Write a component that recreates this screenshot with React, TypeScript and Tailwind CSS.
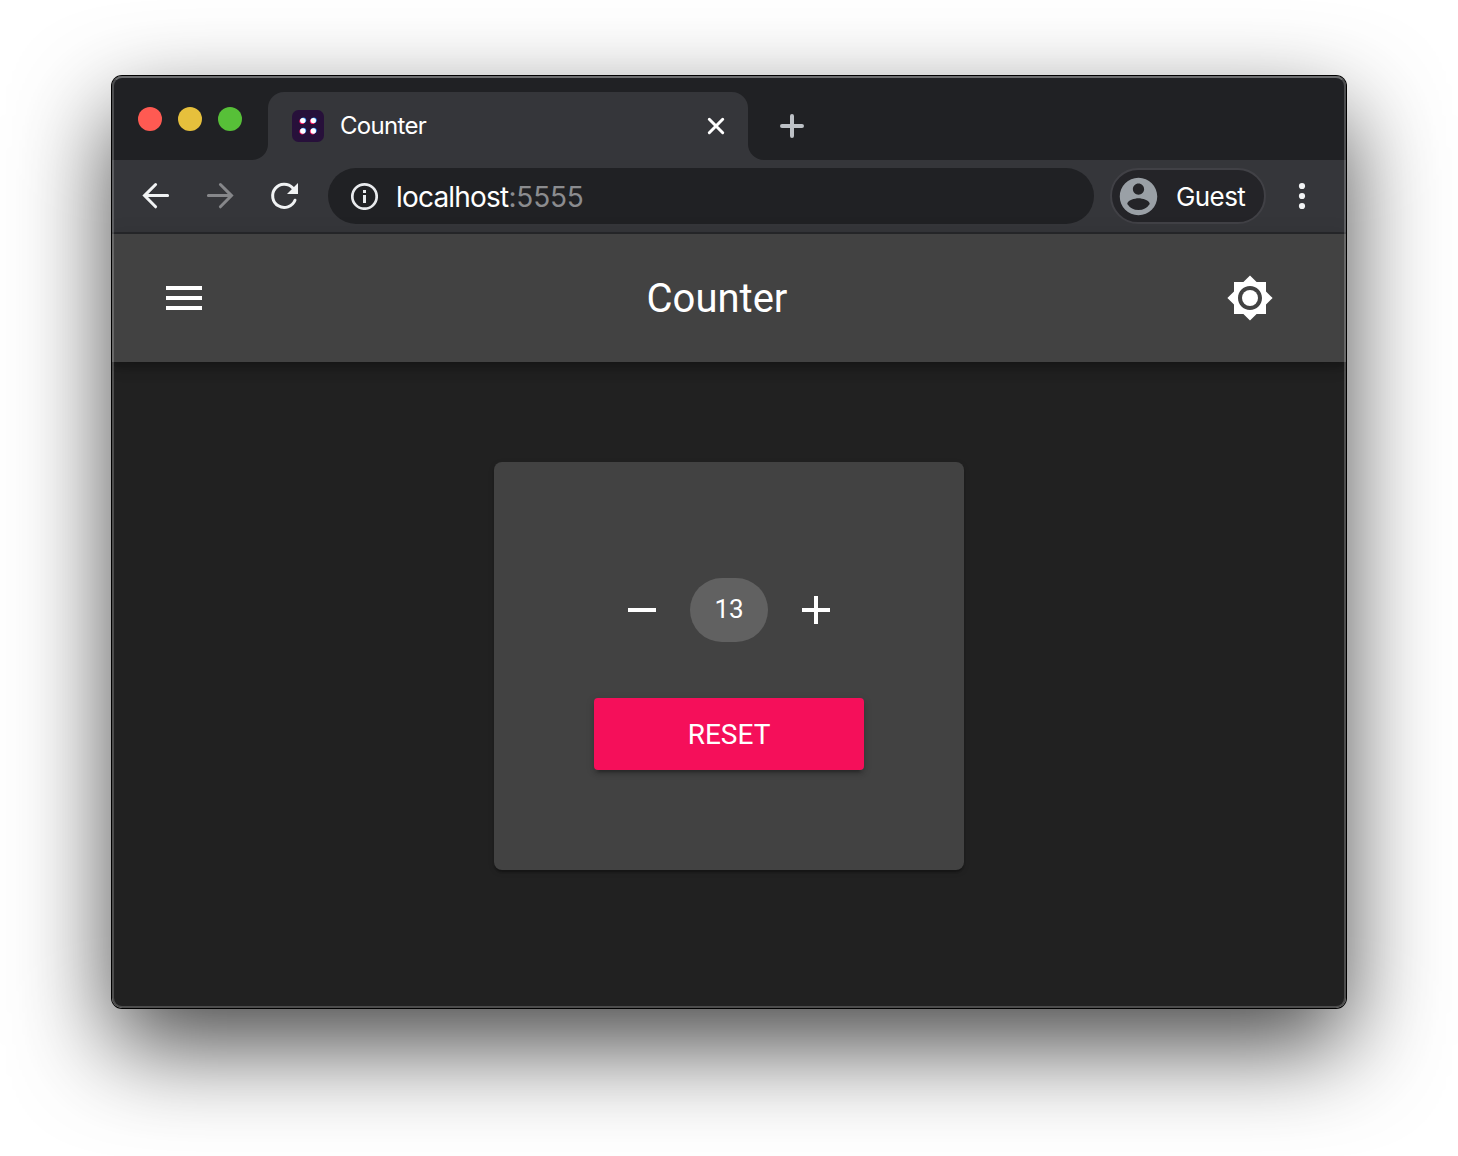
import { useState } from "react";

function TabStrip() {
  return (
    <div className="flex h-[84px] items-end bg-[#202124]">
      <div className="flex h-[84px] w-[156px] gap-4 pl-[26px] pt-[31px]">
        <span className="size-6 rounded-full bg-[#ff5a52]" />
        <span className="size-6 rounded-full bg-[#e6c03c]" />
        <span className="size-6 rounded-full bg-[#57c038]" />
      </div>
      <div className="relative flex h-[68px] w-[480px] items-center rounded-t-2xl bg-[#35363a] pl-6 pr-5">
        <svg className="absolute -left-4 bottom-0 size-4" viewBox="0 0 16 16" fill="#35363a">
          <path d="M16 0v16H0A16 16 0 0 0 16 0z" />
        </svg>
        <svg className="absolute -right-4 bottom-0 size-4" viewBox="0 0 16 16" fill="#35363a">
          <path d="M0 0v16h16A16 16 0 0 1 0 0z" />
        </svg>
        <svg className="size-8 shrink-0" viewBox="0 0 32 32">
          <rect width="32" height="32" rx="6.5" fill="#27103a" />
          <g fill="#ff1763">
            <circle cx="10.2" cy="11.2" r="2.8" />
            <circle cx="20.7" cy="11.2" r="2.8" />
            <circle cx="10.2" cy="21.6" r="2.8" />
            <circle cx="20.7" cy="21.6" r="2.8" />
          </g>
          <g fill="#2a8bf2">
            <circle cx="11.4" cy="10.2" r="2.8" />
            <circle cx="21.9" cy="10.2" r="2.8" />
            <circle cx="11.4" cy="20.6" r="2.8" />
            <circle cx="21.9" cy="20.6" r="2.8" />
          </g>
          <g fill="#fff">
            <circle cx="10.8" cy="10.6" r="2.7" />
            <circle cx="21.3" cy="10.6" r="2.7" />
            <circle cx="10.8" cy="21" r="2.7" />
            <circle cx="21.3" cy="21" r="2.7" />
          </g>
        </svg>
        <span className="ml-4 flex-1 text-2xl leading-8 tracking-[-0.7px] text-white">Counter</span>
        <svg className="size-6" viewBox="0 0 24 24" stroke="#fff" strokeWidth="3" strokeLinecap="round">
          <path d="M5.3 5.3l13.4 13.4M18.7 5.3L5.3 18.7" />
        </svg>
      </div>
      <svg className="mb-[22px] ml-8 size-6" viewBox="0 0 24 24" stroke="#bdc1c6" strokeWidth="4" strokeLinecap="round">
        <path d="M2 12h20M12 2v20" />
      </svg>
    </div>
  );
}

function Toolbar() {
  return (
    <div className="flex h-[74px] items-start border-b-2 border-[#28292c] bg-[#35363a] pl-7 pt-2">
      <div className="flex h-14 w-[188px] items-center gap-8">
        <svg className="size-8" viewBox="0 0 32 32" fill="none" stroke="#f1f3f4" strokeWidth="3" strokeLinecap="round">
          <path d="M27.6 15.6H5M15.6 4.5L4.5 15.6l11.1 11.2" />
        </svg>
        <svg className="size-8" viewBox="0 0 32 32" fill="none" stroke="#86878a" strokeWidth="3" strokeLinecap="round">
          <path d="M4.4 15.6H27M16.4 4.5l11.1 11.1-11.1 11.2" />
        </svg>
        <svg className="size-8" viewBox="0 0 32 32">
          <path d="M27 20.2A11.6 11.6 0 1 1 24.8 8" fill="none" stroke="#f1f3f4" strokeWidth="3" strokeLinecap="round" />
          <path d="M30 3v11H19z" fill="#f1f3f4" />
        </svg>
      </div>
      <div className="flex h-14 w-[766px] items-center rounded-full bg-[#202124] pl-[22px]">
        <svg className="size-7" viewBox="0 0 28 28" fill="none">
          <circle cx="14.5" cy="14.5" r="12.2" stroke="#e8eaed" strokeWidth="2.7" />
          <path d="M13 8h3v3h-3zM13 13h3v8h-3z" fill="#e8eaed" />
        </svg>
        <span className="ml-[18px] pt-px text-[28px] leading-9 tracking-[-0.8px] text-white">
          localhost<span className="tracking-[-0.2px] text-[#8b8c8f]">:5555</span>
        </span>
      </div>
      <div className="ml-4 flex h-14 w-[156px] items-center rounded-full border-2 border-[#414146] bg-[#242428] pl-1">
        <svg className="size-[45px] shrink-0" viewBox="0 0 24 24" fill="#9aa0a6">
          <path d="M12 2C6.48 2 2 6.48 2 12s4.48 10 10 10 10-4.48 10-10S17.52 2 12 2zm0 3c1.66 0 3 1.34 3 3s-1.34 3-3 3-3-1.34-3-3 1.34-3 3-3zm0 14.2a7.2 7.2 0 0 1-6-3.22c.03-1.99 4-3.08 6-3.08 1.99 0 5.97 1.09 6 3.08a7.2 7.2 0 0 1-6 3.22z" />
        </svg>
        <span className="ml-[15px] pt-0.5 text-[26px] leading-9 tracking-[-0.6px] text-white">Guest</span>
      </div>
      <svg className="ml-8 mt-3.5 h-7 w-2" viewBox="0 0 8 28" fill="#f1f3f4">
        <circle cx="4" cy="4" r="3.1" />
        <circle cx="4" cy="14" r="3.1" />
        <circle cx="4" cy="24" r="3.1" />
      </svg>
    </div>
  );
}

function AppBar() {
  return (
    <header className="relative flex h-32 items-center justify-between bg-[#424242] pl-12 pr-[72px] shadow-[0_4px_8px_-2px_rgba(0,0,0,0.2),0_8px_10px_rgba(0,0,0,0.14),0_2px_20px_rgba(0,0,0,0.12)]">
      <button aria-label="Menu">
        <svg className="size-12" viewBox="0 0 24 24" fill="#fff">
          <path d="M3 18h18v-2H3v2zm0-5h18v-2H3v2zm0-7v2h18V6H3z" />
        </svg>
      </button>
      <h1 className="pt-0.5 font-[Roboto,sans-serif] text-[40px] leading-[64px] text-white">Counter</h1>
      <button aria-label="Toggle theme">
        <svg className="size-12" viewBox="0 0 24 24" fill="#fff">
          <path d="M20 15.31L23.31 12 20 8.69V4h-4.69L12 .69 8.69 4H4v4.69L.69 12 4 15.31V20h4.69L12 23.31 15.31 20H20v-4.69zM12 18c-3.31 0-6-2.69-6-6s2.69-6 6-6 6 2.69 6 6-2.69 6-6 6z" />
          <circle cx="12" cy="12" r="4" />
        </svg>
      </button>
    </header>
  );
}

function CounterCard() {
  const [count, setCount] = useState(13);
  return (
    <div className="flex h-[408px] w-[470px] flex-col items-center rounded-lg bg-[#424242] pt-[116px] font-[Roboto,sans-serif] text-white shadow-[0_4px_2px_-2px_rgba(0,0,0,0.2),0_2px_2px_rgba(0,0,0,0.14),0_2px_6px_rgba(0,0,0,0.12)]">
      <div className="flex h-16 items-center gap-6">
        <button aria-label="Decrease" onClick={() => setCount(count - 1)}>
          <svg className="size-12" viewBox="0 0 24 24" fill="#fff">
            <path d="M19 13H5v-2h14v2z" />
          </svg>
        </button>
        <span className="flex h-16 w-[78px] items-center justify-center rounded-[32px] bg-[#616161] pb-0.5 text-[26px] leading-8">
          {count}
        </span>
        <button aria-label="Increase" onClick={() => setCount(count + 1)}>
          <svg className="size-12" viewBox="0 0 24 24" fill="#fff">
            <path d="M19 13h-6v6h-2v-6H5v-2h6V5h2v6h6v2z" />
          </svg>
        </button>
      </div>
      <button
        className="mt-14 h-[72px] w-[270px] rounded bg-[#f50f5a] pt-0.5 text-[28px] leading-[70px] shadow-[0_6px_2px_-4px_rgba(0,0,0,0.2),0_4px_4px_rgba(0,0,0,0.14),0_2px_10px_rgba(0,0,0,0.12)]"
        onClick={() => setCount(0)}
      >
        RESET
      </button>
    </div>
  );
}

export default function App() {
  return (
    <div className="h-[1156px] w-[1458px] overflow-hidden bg-white px-28 pt-[76px] font-[Inter,sans-serif]">
      <div className="relative h-[932px] w-[1234px] rounded-[10px] shadow-[0_0_0_1px_#000,0_38px_96px_rgba(0,0,0,0.72)]">
        <div className="flex h-full flex-col overflow-hidden rounded-[10px] bg-[#212121]">
          <TabStrip />
          <Toolbar />
          <AppBar />
          <main className="flex flex-1 justify-center pt-[100px]">
            <CounterCard />
          </main>
        </div>
        <div className="pointer-events-none absolute inset-0 rounded-[10px] border-2 border-white/20 border-t-white/35" />
      </div>
    </div>
  );
}
